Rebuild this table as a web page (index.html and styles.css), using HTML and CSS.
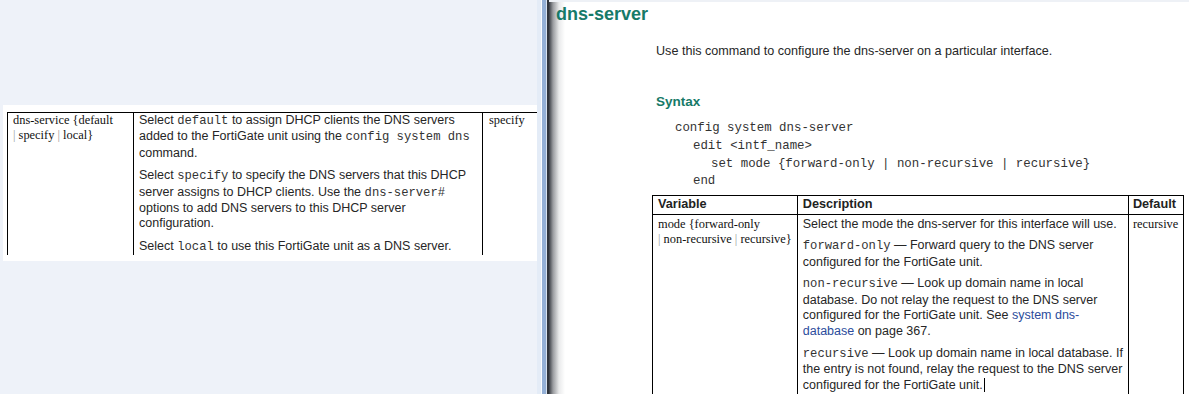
FILE: index.html
```html
<!DOCTYPE html>
<html lang="en">
  <head>
    <meta charset="UTF-8" />
    <title>dns-server</title>
    <link rel="stylesheet" href="styles.css">
  </head>
  <body>
    <div class="screen">
      <div class="left-pane">
        <div class="snippet">
          <table class="param-table snippet-table">
            <tr>
              <td class="var-col">dns-service {default<br><span class="pipe">|</span> specify <span class="pipe">|</span> local}</td>
              <td class="desc-col">
                <p>Select <code>default</code> to assign DHCP clients the DNS servers<br>added to the FortiGate unit using the <code>config system dns</code><br>command.</p>
                <p>Select <code>specify</code> to specify the DNS servers that this DHCP<br>server assigns to DHCP clients. Use the <code>dns-server#</code><br>options to add DNS servers to this DHCP server<br>configuration.</p>
                <p>Select <code>local</code> to use this FortiGate unit as a DNS server.</p>
              </td>
              <td class="def-col">specify</td>
            </tr>
          </table>
        </div>
      </div>

      <div class="splitter"></div>

      <div class="right-pane">
        <h1 class="cmd-title">dns-server</h1>
        <div class="cmd-body">
          <p class="intro">Use this command to configure the dns-server on a particular interface.</p>
          <h2 class="section">Syntax</h2>
          <pre class="syntax"><span class="l0">config system dns-server</span><span class="l1">edit &lt;intf_name&gt;</span><span class="l2">set mode {forward-only | non-recursive | recursive}</span><span class="l1">end</span></pre>
        </div>
        <table class="param-table main-table">
          <tr>
            <th class="head-var">Variable</th>
            <th class="head-desc">Description</th>
            <th class="head-def">Default</th>
          </tr>
          <tr>
            <td class="var-col">mode {forward-only<br><span class="pipe">|</span> non-recursive <span class="pipe">|</span> recursive}</td>
            <td class="desc-col">
              <p>Select the mode the dns-server for this interface will use.</p>
              <p><code>forward-only</code> — Forward query to the DNS server<br>configured for the FortiGate unit.</p>
              <p><code>non-recursive</code> — Look up domain name in local<br>database. Do not relay the request to the DNS server<br>configured for the FortiGate unit. See <a href="#">system dns-<br>database</a> on page 367.</p>
              <p><code>recursive</code> — Look up domain name in local database. If<br>the entry is not found, relay the request to the DNS server<br>configured for the FortiGate unit.<span class="caret"></span></p>
            </td>
            <td class="def-col">recursive</td>
          </tr>
        </table>
      </div>
    </div>
  </body>
</html>
```

FILE: styles.css
```css
body {
  margin: 0;
  font-family: "Liberation Sans", Arial, sans-serif;
  color: #262626;
}

.screen {
  display: flex;
  width: 1189px;
  height: 394px;
  overflow: hidden;
}

/* left window */
.left-pane {
  width: 534px;
  flex-shrink: 0;
  padding: 105px 0 0 3px;
  background: #eef2f9;
}

.snippet {
  width: 530px;
  height: 149px;
  padding: 7px 0 0 4px;
  background: #fff;
}

/* window splitter */
.splitter {
  width: 12px;
  flex-shrink: 0;
  background: linear-gradient(
    to right,
    #e4ecf7 0,
    #e4ecf7 4px,
    #fbfdff 4px,
    #fbfdff 5px,
    #94b0d6 5px,
    #94b0d6 9px,
    #d8e2ef 9px,
    #d8e2ef 10px,
    #2f343c 10px
  );
}

/* right window */
.right-pane {
  flex: 1;
  border-top: 2px solid #eef1f6;
  background: linear-gradient(to right, #3a3e45 0, #9a9ca0 4px, #e9eaeb 10px, #fff 16px);
}

.cmd-title {
  margin: 2px 0 0 7px;
  font-size: 18px;
  line-height: 21px;
  color: #177a68;
}

.cmd-body {
  padding-left: 107px;
}

.intro {
  margin: 19px 0 0;
  font-size: 12.6px;
  line-height: 15.6px;
}

.section {
  margin: 34px 0 0;
  font-size: 13.5px;
  line-height: 16px;
  color: #177a68;
}

.syntax {
  margin: 10.5px 0 0 19px;
  font-family: "Liberation Mono", "Courier New", monospace;
  font-size: 12.4px;
  line-height: 17.7px;
  color: #333;
}

.syntax span {
  display: block;
}

.syntax .l1 {
  padding-left: 18px;
}

.syntax .l2 {
  padding-left: 36px;
}

/* parameter tables */
.param-table {
  border-collapse: collapse;
  font-size: 12.5px;
  line-height: 15.6px;
}

.param-table td,
.param-table th {
  vertical-align: top;
  text-align: left;
}

.param-table p {
  margin: 0 0 6px;
  white-space: nowrap;
}

.param-table p:last-child {
  margin-bottom: 0;
}

.param-table code {
  font-family: "Liberation Mono", "Courier New", monospace;
  font-size: 12.2px;
  color: #333;
}

.var-col,
.def-col {
  font-family: "Liberation Serif", "Times New Roman", serif;
  font-size: 12.4px;
  color: #111;
  white-space: nowrap;
}

.pipe {
  color: #9a9a9a;
}

.snippet-table {
  width: 530px;
  height: 141px;
  border-top: 1px solid #000;
  line-height: 15.4px;
}

.snippet-table td {
  padding: 0 5px;
  border-left: 1px solid #000;
}

.snippet-table p {
  margin-bottom: 7px;
}

.snippet-table .var-col {
  width: 115px;
}

.snippet-table .desc-col {
  width: 338px;
}

.snippet-table .def-col {
  padding-left: 6px;
}

.main-table {
  margin: 4px 0 0 103px;
  width: 532px;
}

.main-table td,
.main-table th {
  border: 1px solid #000;
  padding: 1px 5px;
}

.main-table th {
  font-size: 12.7px;
  color: #222;
}

.main-table td {
  padding-top: 2px;
  padding-bottom: 12px;
}

.head-var,
.main-table .var-col {
  width: 135px;
}

.head-desc,
.main-table .desc-col {
  width: 318px;
}

.main-table .head-def,
.main-table .def-col {
  padding-left: 4px;
}

.main-table a {
  color: #2b4c9c;
  text-decoration: none;
}

.caret {
  display: inline-block;
  width: 1px;
  height: 14px;
  margin-left: 1px;
  vertical-align: -3px;
  background: #000;
}
```
